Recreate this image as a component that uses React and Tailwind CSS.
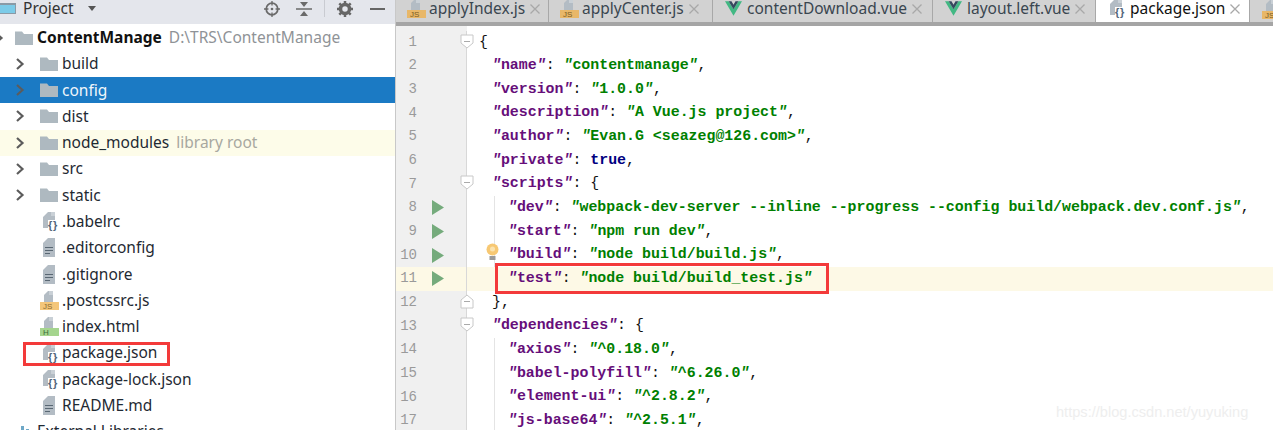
import React from 'react';

const uiFont = "font-['Noto_Sans','Open_Sans',sans-serif]";

function Folder({ className = '' }) {
  return (
    <svg width="18" height="14" viewBox="0 0 18 14" className={className}>
      <path d="M0 0.5h7l2 2.5h9v11H0z" fill="#aeb9c0" />
    </svg>
  );
}

function Chevron({ className = '' }) {
  return (
    <svg width="10" height="14" viewBox="0 0 10 14" className={className}>
      <path d="M2 2l5.5 5L2 12" fill="none" stroke="#5c5c5c" strokeWidth="2.2" />
    </svg>
  );
}

function JsonIcon() {
  return (
    <svg width="18" height="19" viewBox="0 0 18 19" className="shrink-0">
      <path d="M0 16V5l5-5h7v8H7v8z" fill="#b3bcc4" />
      <path d="M8 0h4v4H8z" fill="#c9d0d6" />
      <rect x="5" y="8" width="13" height="11" fill="#fff" />
      <text x="5" y="17" fontSize="11" fontWeight="700" fill="#51667a" fontFamily="Liberation Sans" letterSpacing="0.6">{'{}'}</text>
    </svg>
  );
}

function TextIcon() {
  return (
    <svg width="13" height="19" viewBox="0 0 13 19" className="shrink-0">
      <path d="M0 19V5l5-5h7v19z" fill="#b3bcc4" />
      <path d="M2 9.500h8M2 12.500h8M2 15.500h5" stroke="#596773" strokeWidth="1.2" />
    </svg>
  );
}

function LabelIcon({ label, color, ink }) {
  return (
    <svg width="20" height="19" viewBox="0 0 20 19" className="shrink-0">
      <path d="M4 11V4l4-4h5v11z" fill="#b3bcc4" />
      <path d="M9 0h4v4H9z" fill="#c9d0d6" />
      <rect x="0" y="11" width="19" height="8" fill={color} />
      <text x="3" y="18" fontSize="8" fill={ink} fontFamily="Liberation Sans">{label}</text>
    </svg>
  );
}

function VueIcon() {
  return (
    <svg width="17" height="15" viewBox="0 0 21 18" className="mr-[3px] shrink-0">
      <path d="M0 0h4.500l6 10 6-10H21L10.500 18z" fill="#42b883" />
      <path d="M4.500 0h3.500l2.500 4.500L13 0h3.500l-6 10z" fill="#35495e" />
    </svg>
  );
}

const tree = [
  { name: 'build', folder: true },
  { name: 'config', folder: true, selected: true },
  { name: 'dist', folder: true },
  { name: 'node_modules', folder: true, note: 'library root', library: true },
  { name: 'src', folder: true },
  { name: 'static', folder: true },
  { name: '.babelrc', icon: 'json' },
  { name: '.editorconfig', icon: 'text' },
  { name: '.gitignore', icon: 'text' },
  { name: '.postcssrc.js', icon: 'js' },
  { name: 'index.html', icon: 'html' },
  { name: 'package.json', icon: 'json' },
  { name: 'package-lock.json', icon: 'json' },
  { name: 'README.md', icon: 'text' },
];

function TreeIcon({ type }) {
  if (type === 'json') return <div className="ml-[43px] w-[19px]"><JsonIcon /></div>;
  if (type === 'text') return <div className="ml-[43px] w-[19px]"><TextIcon /></div>;
  if (type === 'js') return <div className="ml-[40px] w-[22px]"><LabelIcon label="JS" color="#f4c67a" ink="#8a6a30" /></div>;
  return <div className="ml-[40px] w-[22px]"><LabelIcon label="H" color="#a5d58e" ink="#3c6b3a" /></div>;
}

function TreeRow({ item }) {
  const bg = item.selected ? 'bg-[#1b7ac4]' : item.library ? 'bg-[#fdfce9]' : '';
  return (
    <div className={`flex h-[26.3px] items-center text-[15.5px] ${bg} ${item.selected ? 'text-[#f0f6fb]' : 'text-[#1f2a33]'}`}>
      {item.folder ? (
        <>
          <Chevron className="ml-[15px] shrink-0" />
          <Folder className="ml-[15px] mr-[4px] shrink-0" />
        </>
      ) : (
        <TreeIcon type={item.icon} />
      )}
      <span>{item.name}</span>
      {item.note && <span className="ml-[7px] text-[#a8a8a0]">{item.note}</span>}
    </div>
  );
}

function ProjectPanel() {
  return (
    <aside className={`relative w-[395px] shrink-0 overflow-hidden ${uiFont}`}>
      <div className="flex h-[24.4px] items-center bg-[#e4e6ec] pb-[7px]">
        <div className="h-[11px] w-[16px] border-t-2 border-r border-b border-[#8a9aa6] bg-[#7ccbe8]" />
        <span className="ml-[7px] text-[15.5px] leading-[17px] text-[#333]">Project</span>
        <svg width="8" height="5" viewBox="0 0 8 5" className="ml-[14px]"><path d="M0 0h8L4 5z" fill="#555" /></svg>
        <svg width="16" height="16" viewBox="0 0 18 18" className="ml-[168px]" fill="none" stroke="#6a6a6a">
          <circle cx="9" cy="9" r="6.500" strokeWidth="2" />
          <circle cx="9" cy="9" r="1.500" fill="#6a6a6a" stroke="none" />
          <path d="M9 0v5M9 13v5M0 9h5M13 9h5" strokeWidth="1.500" />
        </svg>
        <svg width="16" height="16" viewBox="0 0 16 16" className="ml-[16px]">
          <path d="M0 8h16" stroke="#6a6a6a" strokeWidth="1.500" />
          <path d="M4 1h8L8 6zM4 15h8L8 10z" fill="#6a6a6a" />
        </svg>
        <div className="ml-[12px] h-[17px] w-px bg-[#c9cbd1]" />
        <svg width="16" height="16" viewBox="0 0 16 16" className="ml-[12px]">
          <circle cx="8" cy="8" r="4.500" fill="none" stroke="#666" strokeWidth="3.500" />
          <path d="M8 0v3M8 13v3M0 8h3M13 8h3M2.300 2.300l2 2M11.700 11.700l2 2M13.700 2.300l-2 2M4.300 11.700l-2 2" stroke="#666" strokeWidth="2.500" />
        </svg>
        <div className="ml-[17px] h-[2px] w-[15px] bg-[#666]" />
      </div>

      <div className="flex h-[26.3px] items-center text-[15.5px]">
        <Chevron className="ml-[-6px] shrink-0" />
        <Folder className="ml-[11px] mr-[4px] shrink-0" />
        <span className="font-bold text-[#111]">ContentManage</span>
        <span className="ml-[7px] text-[#8f9397]">D:\TRS\ContentManage</span>
      </div>

      {tree.map((item) => <TreeRow key={item.name} item={item} />)}

      <div className="flex h-[26.3px] items-center text-[15.5px] text-[#1f2a33]">
        <svg width="18" height="14" viewBox="0 0 18 14" className="ml-[15px] mr-[4px]">
          <path d="M1 5h3v9H1zM6 1h3v13H6zM11 4h3v10h-3z" fill="#6fa8c7" />
        </svg>
        <span>External Libraries</span>
      </div>

      {/* highlight drawn by hand over the screenshot */}
      <div className="absolute left-[23px] top-[342px] h-[24px] w-[147px] border-[3px] border-[#f33a3a]" />
    </aside>
  );
}

const tabs = [
  { name: 'applyIndex.js', icon: 'js', width: 'w-[153px]' },
  { name: 'applyCenter.js', icon: 'js', width: 'w-[164px]' },
  { name: 'contentDownload.vue', icon: 'vue', width: 'w-[220px]' },
  { name: 'layout.left.vue', icon: 'vue', width: 'w-[163px]' },
  { name: 'package.json', icon: 'json', width: 'w-[154px]', active: true },
];

function Tab({ tab }) {
  return (
    <div className={`flex h-[22px] shrink-0 items-center overflow-hidden border-r border-[#a8a8a8] pb-[5px] ${tab.icon === 'vue' ? 'pl-[12px]' : 'pl-[11px]'} ${tab.width} ${tab.active ? 'bg-white text-[#111]' : 'text-[#3a4650]'}`}>
      {tab.icon === 'js' && <LabelIcon label="JS" color="#e8b768" ink="#7a5c24" />}
      {tab.icon === 'vue' && <VueIcon />}
      {tab.icon === 'json' && <div className="ml-[3px]"><JsonIcon /></div>}
      <span className="ml-[2px] whitespace-nowrap leading-[17px]">{tab.name}</span>
      <svg width="10" height="10" viewBox="0 0 10 10" className="ml-[5px] shrink-0">
        <path d="M0.500 0.500l9 9M9.500 0.500l-9 9" stroke="#a8a8a8" strokeWidth="1.300" />
      </svg>
    </div>
  );
}

function Q() {
  return <span className="italic">"</span>;
}

function Key({ children }) {
  return <span className="font-bold text-[#660e7a]"><Q />{children}<Q /></span>;
}

function Str({ children }) {
  return <span className="font-bold text-[#008000]"><Q />{children}<Q /></span>;
}

function Pair({ k, v, comma = true }) {
  return <><Key>{k}</Key>: <Str>{v}</Str>{comma && ','}</>;
}

const lines = [
  { indent: 0, body: '{', fold: 'open' },
  { indent: 1, body: <Pair k="name" v="contentmanage" /> },
  { indent: 1, body: <Pair k="version" v="1.0.0" /> },
  { indent: 1, body: <Pair k="description" v="A Vue.js project" /> },
  { indent: 1, body: <Pair k="author" v="Evan.G <seazeg@126.com>" /> },
  { indent: 1, body: <><Key>private</Key>: <span className="font-bold text-[#000080]">true</span>,</> },
  { indent: 1, body: <><Key>scripts</Key>: {'{'}</>, fold: 'open' },
  { indent: 2, body: <Pair k="dev" v="webpack-dev-server --inline --progress --config build/webpack.dev.conf.js" />, run: true, guide: true },
  { indent: 2, body: <Pair k="start" v="npm run dev" />, run: true, guide: true },
  { indent: 2, body: <Pair k="build" v="node build/build.js" />, run: true, guide: true, bulb: true },
  { indent: 2, body: <Pair k="test" v="node build/build_test.js" comma={false} />, run: true, current: true },
  { indent: 1, body: '},', fold: 'close' },
  { indent: 1, body: <><Key>dependencies</Key>: {'{'}</>, fold: 'open' },
  { indent: 2, body: <Pair k="axios" v="^0.18.0" />, guide: true },
  { indent: 2, body: <Pair k="babel-polyfill" v="^6.26.0" />, guide: true },
  { indent: 2, body: <Pair k="element-ui" v="^2.8.2" />, guide: true },
  { indent: 2, body: <Pair k="js-base64" v="^2.5.1" />, guide: true },
];

const indents = ['pl-[12px]', 'pl-[25px]', 'pl-[41px]'];

function FoldMark({ type }) {
  return (
    <svg width="14" height="15" viewBox="0 0 14 15" className="absolute left-[64px] top-[3px] z-10">
      {type === 'open' ? (
        <path d="M1 1h12v8l-6 5-6-5z" fill="#fff" stroke="#c8c8c8" />
      ) : (
        <path d="M1 14h12V6L7 1 1 6z" fill="#fff" stroke="#c8c8c8" />
      )}
      <path d="M4 7.500h6" stroke="#aaa" />
    </svg>
  );
}

function CodeLine({ line, number }) {
  return (
    <div className={`flex h-[23.67px] items-center ${line.current ? 'bg-[#fdf9e6]' : ''}`}>
      <div className={`relative flex h-full w-[71px] shrink-0 items-center border-r border-[#d8d8d8] ${line.current ? 'bg-[#fdf9e6]' : 'bg-[#f0f0f0]'}`}>
        <span className="w-[21px] text-right text-[14px] font-normal text-[#9a9a9a]">{number}</span>
        {line.run && (
          <svg width="12" height="15" viewBox="0 0 12 15" className="ml-[15px]"><path d="M0 0l12 7.500L0 15z" fill="#75ab7c" /></svg>
        )}
        {line.fold && <FoldMark type={line.fold} />}
      </div>
      <div className={`relative h-full flex-1 whitespace-pre leading-[23.67px] ${indents[line.indent]}`}>
        {line.guide && <div className="absolute left-[27px] top-0 h-full w-px bg-[#e4e4e4]" />}
        {line.bulb && (
          <svg width="13" height="19" viewBox="0 0 13 19" className="absolute left-[19px] top-0">
            <circle cx="6.500" cy="6.500" r="6" fill="#f7c873" />
            <circle cx="6.500" cy="6" r="2.500" fill="#fbe3ae" />
            <rect x="3.500" y="13" width="6" height="4" fill="#9a9a9a" />
          </svg>
        )}
        <span>{line.body}</span>
      </div>
    </div>
  );
}

function Editor() {
  return (
    <main className="relative min-w-0 flex-1 overflow-hidden border-l border-[#c8c8c8] bg-white">
      <div className={`flex h-[26px] border-b-[4px] border-[#a5a5a5] bg-[#d2d2d2] text-[15.5px] ${uiFont}`}>
        {tabs.map((tab) => <Tab key={tab.name} tab={tab} />)}
        <div className="pl-[12px]"><LabelIcon label="JS" color="#e8b768" ink="#7a5c24" /></div>
      </div>
      <div className="h-[4.5px] w-[71px] bg-[#f0f0f0]" />
      <div className="font-['Liberation_Mono',monospace] text-[14.9px] text-[#111]">
        {lines.map((line, i) => <CodeLine key={i} line={line} number={i + 1} />)}
      </div>

      <div className="absolute left-[99px] top-[263px] h-[31px] w-[334px] border-[3px] border-[#f33a3a]" />
      <span className="absolute left-[660px] top-[402px] font-['Liberation_Sans',sans-serif] text-[14.6px] text-[#eeeeee]">https://blog.csdn.net/yuyuking</span>
    </main>
  );
}

export default function App() {
  return (
    <div className="flex h-[430px] w-[1273px] overflow-hidden bg-white">
      <ProjectPanel />
      <Editor />
    </div>
  );
}
